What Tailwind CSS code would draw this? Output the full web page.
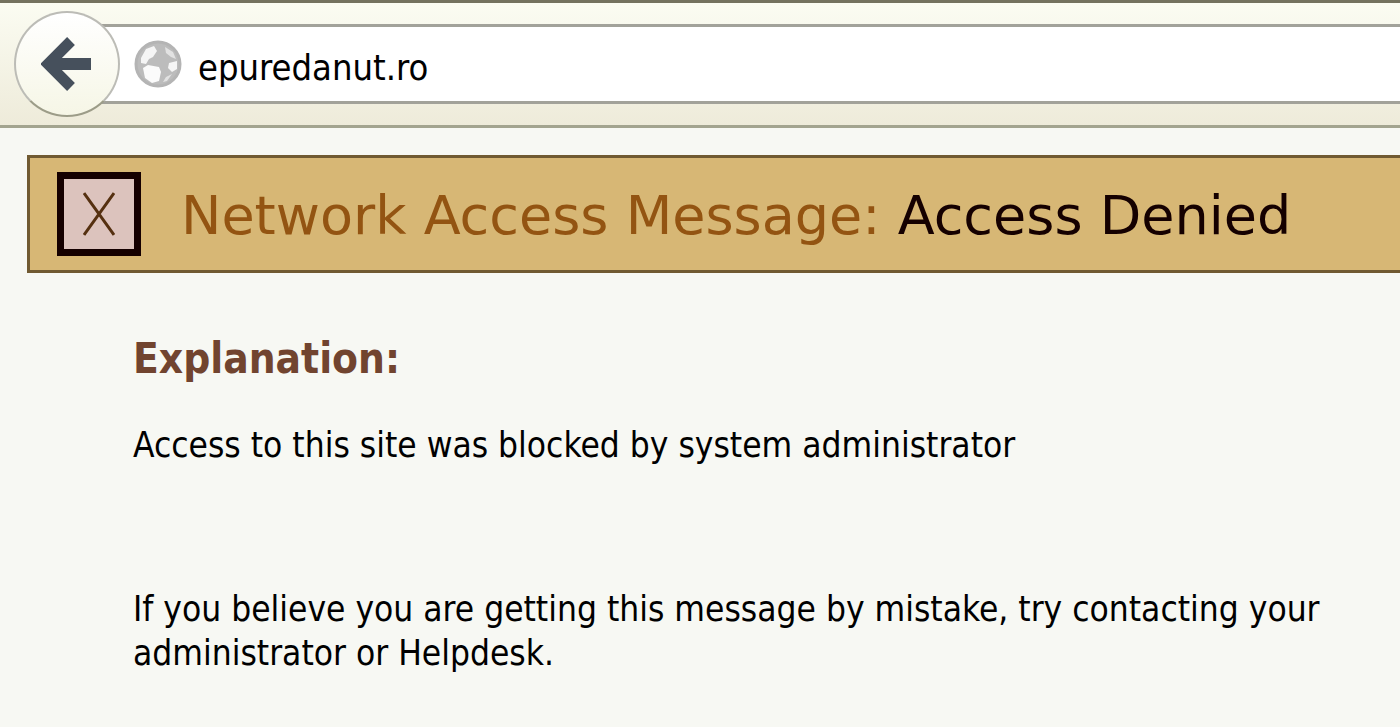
<!DOCTYPE html>
<html lang="en">
  <head>
    <meta charset="UTF-8" />
    <meta name="viewport" content="width=device-width, initial-scale=1.0" />
    <title>Access Denied</title>
    <script src="https://cdn.jsdelivr.net/npm/@tailwindcss/browser@4"></script>
  </head>
  <body class="min-h-screen bg-[#f7f8f3] text-black font-['DejaVu_Sans_Condensed','DejaVu_Sans',sans-serif] overflow-x-hidden">

    <!-- Browser toolbar -->
    <header class="flex items-start h-32 pl-[14px] pt-2 border-t-3 border-t-[#74725f] border-b-3 border-b-[#a3a48f] bg-linear-to-b from-[#fbfcf2] to-[#eeebda]">
      <button type="button" aria-label="Back"
        class="relative z-10 shrink-0 flex items-center justify-center size-[106px] rounded-full border-2 border-[#bcbcb6] border-b-[#9c9c88] bg-linear-to-b from-white to-[#f6f6e6]">
        <svg class="w-[52px] h-[54px]" viewBox="0 0 52 54" fill="none" stroke="#46505c" aria-hidden="true">
          <path d="M30 4 7 27l23 23" stroke-width="11" />
          <path d="M8 27h42" stroke-width="12" />
        </svg>
      </button>
      <div class="flex-1 flex items-center gap-4 h-20 mt-[13px] -ml-5 pl-[34px] border-y-3 border-[#a2a29a] bg-white">
        <svg class="shrink-0 size-12" viewBox="0 0 48 48" aria-hidden="true">
          <circle cx="24" cy="24" r="22" fill="#bcbcbc" stroke="#b4b4b4" stroke-width="3" />
          <path d="M7 18 12 9l8-3 3 5-4 6-4 2-3 5-5-1Z" fill="#f5f5f5" />
          <path d="M9 28l5-3 11 2 2 5-2 9-7 2-7-5Z" fill="#fbfbfb" />
          <path d="M31 7l8 5 3 7-5-2-5-4Z" fill="#e2e2e2" />
          <path d="M35 23l8-2v8l-5 3-4-4Z" fill="#f5f5f5" />
          <path d="M32 37l6-3-5 7-4 1Z" fill="#e2e2e2" />
        </svg>
        <input type="text" aria-label="Address" value="epuredanut.ro" class="flex-1 min-w-0 pt-2 text-[36px] leading-10 outline-none" />
      </div>
    </header>

    <!-- Denied banner -->
    <div class="flex items-center gap-10 h-[118px] ml-[27px] mt-[27px] pl-[27px] border-3 border-r-0 border-[#705a31] bg-[#d7b775]">
      <div class="shrink-0 flex items-center justify-center size-[84px] border-7 border-[#150000] bg-[#dcc3bd]">
        <svg class="w-8 h-11" viewBox="0 0 32 44" fill="none" stroke="#553010" stroke-width="3" aria-label="X">
          <path d="M1 1 31 43M31 1 1 43" />
        </svg>
      </div>
      <h1 class="pt-1 font-['DejaVu_Sans',sans-serif] text-[54px] leading-16 whitespace-nowrap text-[#935412]">Network Access Message: <span class="text-[#150000]">Access Denied</span></h1>
    </div>

    <!-- Message -->
    <main class="pl-[133px] pr-8 pt-[62px] text-[35px] leading-11">
      <h2 class="text-[42px] leading-12 font-bold text-[#71442f]">Explanation:</h2>
      <p class="mt-10">Access to this site was blocked by system administrator</p>
      <p class="mt-30">If you believe you are getting this message by mistake, try contacting your administrator or Helpdesk.</p>
    </main>

  </body>
</html>
